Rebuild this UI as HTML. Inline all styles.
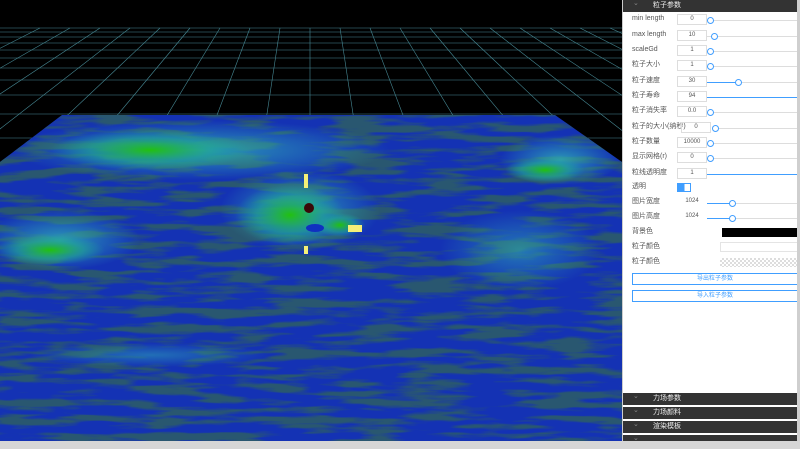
<!DOCTYPE html>
<html><head><meta charset="utf-8"><style>
*{margin:0;padding:0;box-sizing:border-box}
body{width:800px;height:449px;overflow:hidden;background:#000;position:relative;font-family:"Liberation Sans","Noto Sans CJK SC",sans-serif}
#scene{position:absolute;left:0;top:0}
#panel{position:absolute;left:622px;top:0;width:175px;height:441px;background:#fff;border-left:1px solid #ccc}
.hdr{position:absolute;left:0;width:175px;height:12px;background:#333;color:#eee;font-size:7px;line-height:12px;padding-left:30px}
.hdr:before{content:"⌄";position:absolute;left:10px;top:-2px;color:#888;font-size:7px}
.row{position:absolute;left:9px;font-size:7px;color:#555;height:12px;line-height:12px;white-space:nowrap}
.inp{position:absolute;left:45px;top:1px;width:30px;height:11px;border:1px solid #ddd;font-size:6px;line-height:9px;text-align:center;color:#555}
.sl{position:absolute;top:7px;height:1px;background:#ddd;right:-175px}
.kn{position:absolute;top:-3px;width:7px;height:7px;border:1.3px solid #409eff;border-radius:50%;background:#fff}
.btn{position:absolute;left:9px;width:166px;height:12px;border:1px solid #409eff;font-size:6px;color:#409eff;text-align:center;line-height:10px}
#sb{position:absolute;left:0;top:441px;width:800px;height:8px;background:#d6d6d6}
#vs{position:absolute;left:797px;top:0;width:3px;height:441px;background:#cfcfcf}
</style></head><body>
<svg id="scene" width="622" height="441" viewBox="0 0 622 441">
<defs>
<radialGradient id="g1" cx="0.5" cy="0.5" r="0.5"><stop offset="0" stop-color="#22c010" stop-opacity="1"/><stop offset=".6" stop-color="#20a890" stop-opacity=".6"/><stop offset="1" stop-color="#1aa0a0" stop-opacity="0"/></radialGradient>
<radialGradient id="g2" cx="0.5" cy="0.5" r="0.5"><stop offset="0" stop-color="#30b0b8" stop-opacity=".8"/><stop offset="1" stop-color="#30b0b8" stop-opacity="0"/></radialGradient>
<clipPath id="cp"><polygon points="0,162 62,115 555,115 622,162 622,441 0,441"/></clipPath>
<filter id="n" x="0" y="0" width="100%" height="100%" color-interpolation-filters="sRGB">
<feTurbulence type="fractalNoise" baseFrequency="0.015 0.12" numOctaves="3" seed="4"/>
<feColorMatrix type="matrix" values="0 0 0 0 0.16  0 0 0 0 0.34  0 0 0 0 0.44  0 0 0 5 -2.2"/>
</filter>
</defs>
<rect width="622" height="441" fill="#000"/>
<g stroke="#5fb8c8" stroke-width="0.6" opacity=".75">
<line x1="0" y1="28" x2="622" y2="28"/><line x1="0" y1="32" x2="622" y2="32"/><line x1="0" y1="37" x2="622" y2="37"/><line x1="0" y1="43" x2="622" y2="43"/><line x1="0" y1="50" x2="622" y2="50"/><line x1="0" y1="58" x2="622" y2="58"/><line x1="0" y1="68" x2="622" y2="68"/><line x1="0" y1="80" x2="622" y2="80"/><line x1="0" y1="95" x2="622" y2="95"/><line x1="0" y1="114" x2="622" y2="114"/><line x1="0" y1="138" x2="622" y2="138"/>
<line x1="310" y1="28" x2="310" y2="160"/>
<line x1="280" y1="28" x2="260" y2="160"/><line x1="250" y1="28" x2="200" y2="160"/><line x1="220" y1="28" x2="140" y2="160"/><line x1="190" y1="28" x2="80" y2="160"/><line x1="160" y1="28" x2="20" y2="160"/><line x1="130" y1="28" x2="-40" y2="160"/><line x1="100" y1="28" x2="-100" y2="160"/><line x1="70" y1="28" x2="-160" y2="160"/><line x1="40" y1="28" x2="-220" y2="160"/>
<line x1="340" y1="28" x2="360" y2="160"/><line x1="370" y1="28" x2="420" y2="160"/><line x1="400" y1="28" x2="480" y2="160"/><line x1="430" y1="28" x2="540" y2="160"/><line x1="460" y1="28" x2="600" y2="160"/><line x1="490" y1="28" x2="660" y2="160"/><line x1="520" y1="28" x2="720" y2="160"/><line x1="550" y1="28" x2="780" y2="160"/><line x1="580" y1="28" x2="840" y2="160"/><line x1="610" y1="28" x2="900" y2="160"/>
</g>
<g clip-path="url(#cp)">
<rect width="622" height="441" fill="#1432b4"/>
<rect width="622" height="441" filter="url(#n)"/>
<ellipse cx="200" cy="150" rx="190" ry="30" fill="url(#g2)"/>
<ellipse cx="150" cy="150" rx="100" ry="20" fill="url(#g1)"/>
<ellipse cx="300" cy="210" rx="80" ry="40" fill="url(#g2)"/>
<ellipse cx="290" cy="215" rx="55" ry="30" fill="url(#g1)"/>
<ellipse cx="340" cy="225" rx="25" ry="12" fill="url(#g1)"/>
<ellipse cx="60" cy="240" rx="80" ry="30" fill="url(#g2)"/>
<ellipse cx="50" cy="250" rx="55" ry="15" fill="url(#g1)"/>
<ellipse cx="560" cy="160" rx="60" ry="25" fill="url(#g2)"/>
<ellipse cx="545" cy="170" rx="40" ry="12" fill="url(#g1)"/>
<ellipse cx="520" cy="250" rx="80" ry="40" fill="url(#g2)" opacity=".7"/>
<ellipse cx="150" cy="355" rx="120" ry="12" fill="url(#g2)" opacity=".6"/>
<ellipse cx="315" cy="228" rx="9" ry="4" fill="#1030c0"/>
</g>
<rect x="304" y="174" width="4" height="14" fill="#f4f078"/>
<rect x="304" y="246" width="4" height="8" fill="#f4f078"/>
<rect x="348" y="225" width="14" height="7" fill="#f4f078"/>
<circle cx="309" cy="208" r="5" fill="#3a0808"/>
</svg>
<div id="panel">
<div class="hdr" style="top:0">粒子参数</div>
<div class="row" style="top:13px">min length<div class="inp">0</div><div class="sl" style="left:75px;width:100px"><div class="kn" style="left:0"></div></div></div>
<div class="row" style="top:29px">max length<div class="inp">10</div><div class="sl" style="left:75px;width:100px"><div class="kn" style="left:4px"></div></div></div>
<div class="row" style="top:44px">scaleGd<div class="inp">1</div><div class="sl" style="left:75px;width:100px"><div class="kn" style="left:0"></div></div></div>
<div class="row" style="top:59px">粒子大小<div class="inp">1</div><div class="sl" style="left:75px;width:100px"><div class="kn" style="left:0"></div></div></div>
<div class="row" style="top:75px">粒子速度<div class="inp">30</div><div class="sl" style="left:75px;width:100px;background:linear-gradient(90deg,#409eff 30%,#ddd 30%)"><div class="kn" style="left:28px"></div></div></div>
<div class="row" style="top:90px">粒子寿命<div class="inp">94</div><div class="sl" style="left:75px;width:94px;background:#409eff"><div class="kn" style="left:90px"></div></div></div>
<div class="row" style="top:105px">粒子消失率<div class="inp">0.0</div><div class="sl" style="left:75px;width:100px"><div class="kn" style="left:0"></div></div></div>
<div class="row" style="top:121px">粒子的大小(纳秒)<div class="inp" style="left:49px">0</div><div class="sl" style="left:80px;width:100px"><div class="kn" style="left:0"></div></div></div>
<div class="row" style="top:136px">粒子数量<div class="inp">10000</div><div class="sl" style="left:75px;width:100px"><div class="kn" style="left:0"></div></div></div>
<div class="row" style="top:151px">显示网格(r)<div class="inp">0</div><div class="sl" style="left:75px;width:100px"><div class="kn" style="left:0"></div></div></div>
<div class="row" style="top:167px">粒线透明度<div class="inp">1</div><div class="sl" style="left:75px;width:100px;background:#409eff"></div></div>
<div class="row" style="top:181px">透明<div style="position:absolute;left:45px;top:2px;width:14px;height:9px;border:1px solid #409eff;background:linear-gradient(90deg,#409eff 55%,#fff 55%)"></div></div>
<div class="row" style="top:196px">图片宽度<div class="inp" style="border:none">1024</div><div class="sl" style="left:75px;width:100px;background:linear-gradient(90deg,#409eff 24%,#ddd 24%)"><div class="kn" style="left:22px"></div></div></div>
<div class="row" style="top:211px">图片高度<div class="inp" style="border:none">1024</div><div class="sl" style="left:75px;width:100px;background:linear-gradient(90deg,#409eff 24%,#ddd 24%)"><div class="kn" style="left:22px"></div></div></div>
<div class="row" style="top:226px">背景色<div style="position:absolute;left:90px;top:2px;width:80px;height:9px;background:#000"></div></div>
<div class="row" style="top:241px">粒子颜色<div style="position:absolute;left:88px;top:1px;width:80px;height:10px;border:1px solid #e4e4e4"></div></div>
<div class="row" style="top:256px">粒子颜色<div style="position:absolute;left:88px;top:2px;width:80px;height:9px;background:repeating-conic-gradient(#ddd 0 25%,#fff 0 50%) 0 0/4px 4px"></div></div>
<div class="btn" style="top:273px">导出粒子参数</div>
<div class="btn" style="top:290px">导入粒子参数</div>
<div class="hdr" style="top:393px">力场参数</div>
<div class="hdr" style="top:407px">力场颜料</div>
<div class="hdr" style="top:421px">渲染模板</div>
<div class="hdr" style="top:435px;height:6px"></div>
</div>
<div id="vs"></div>
<div id="sb"></div>
</body></html>
